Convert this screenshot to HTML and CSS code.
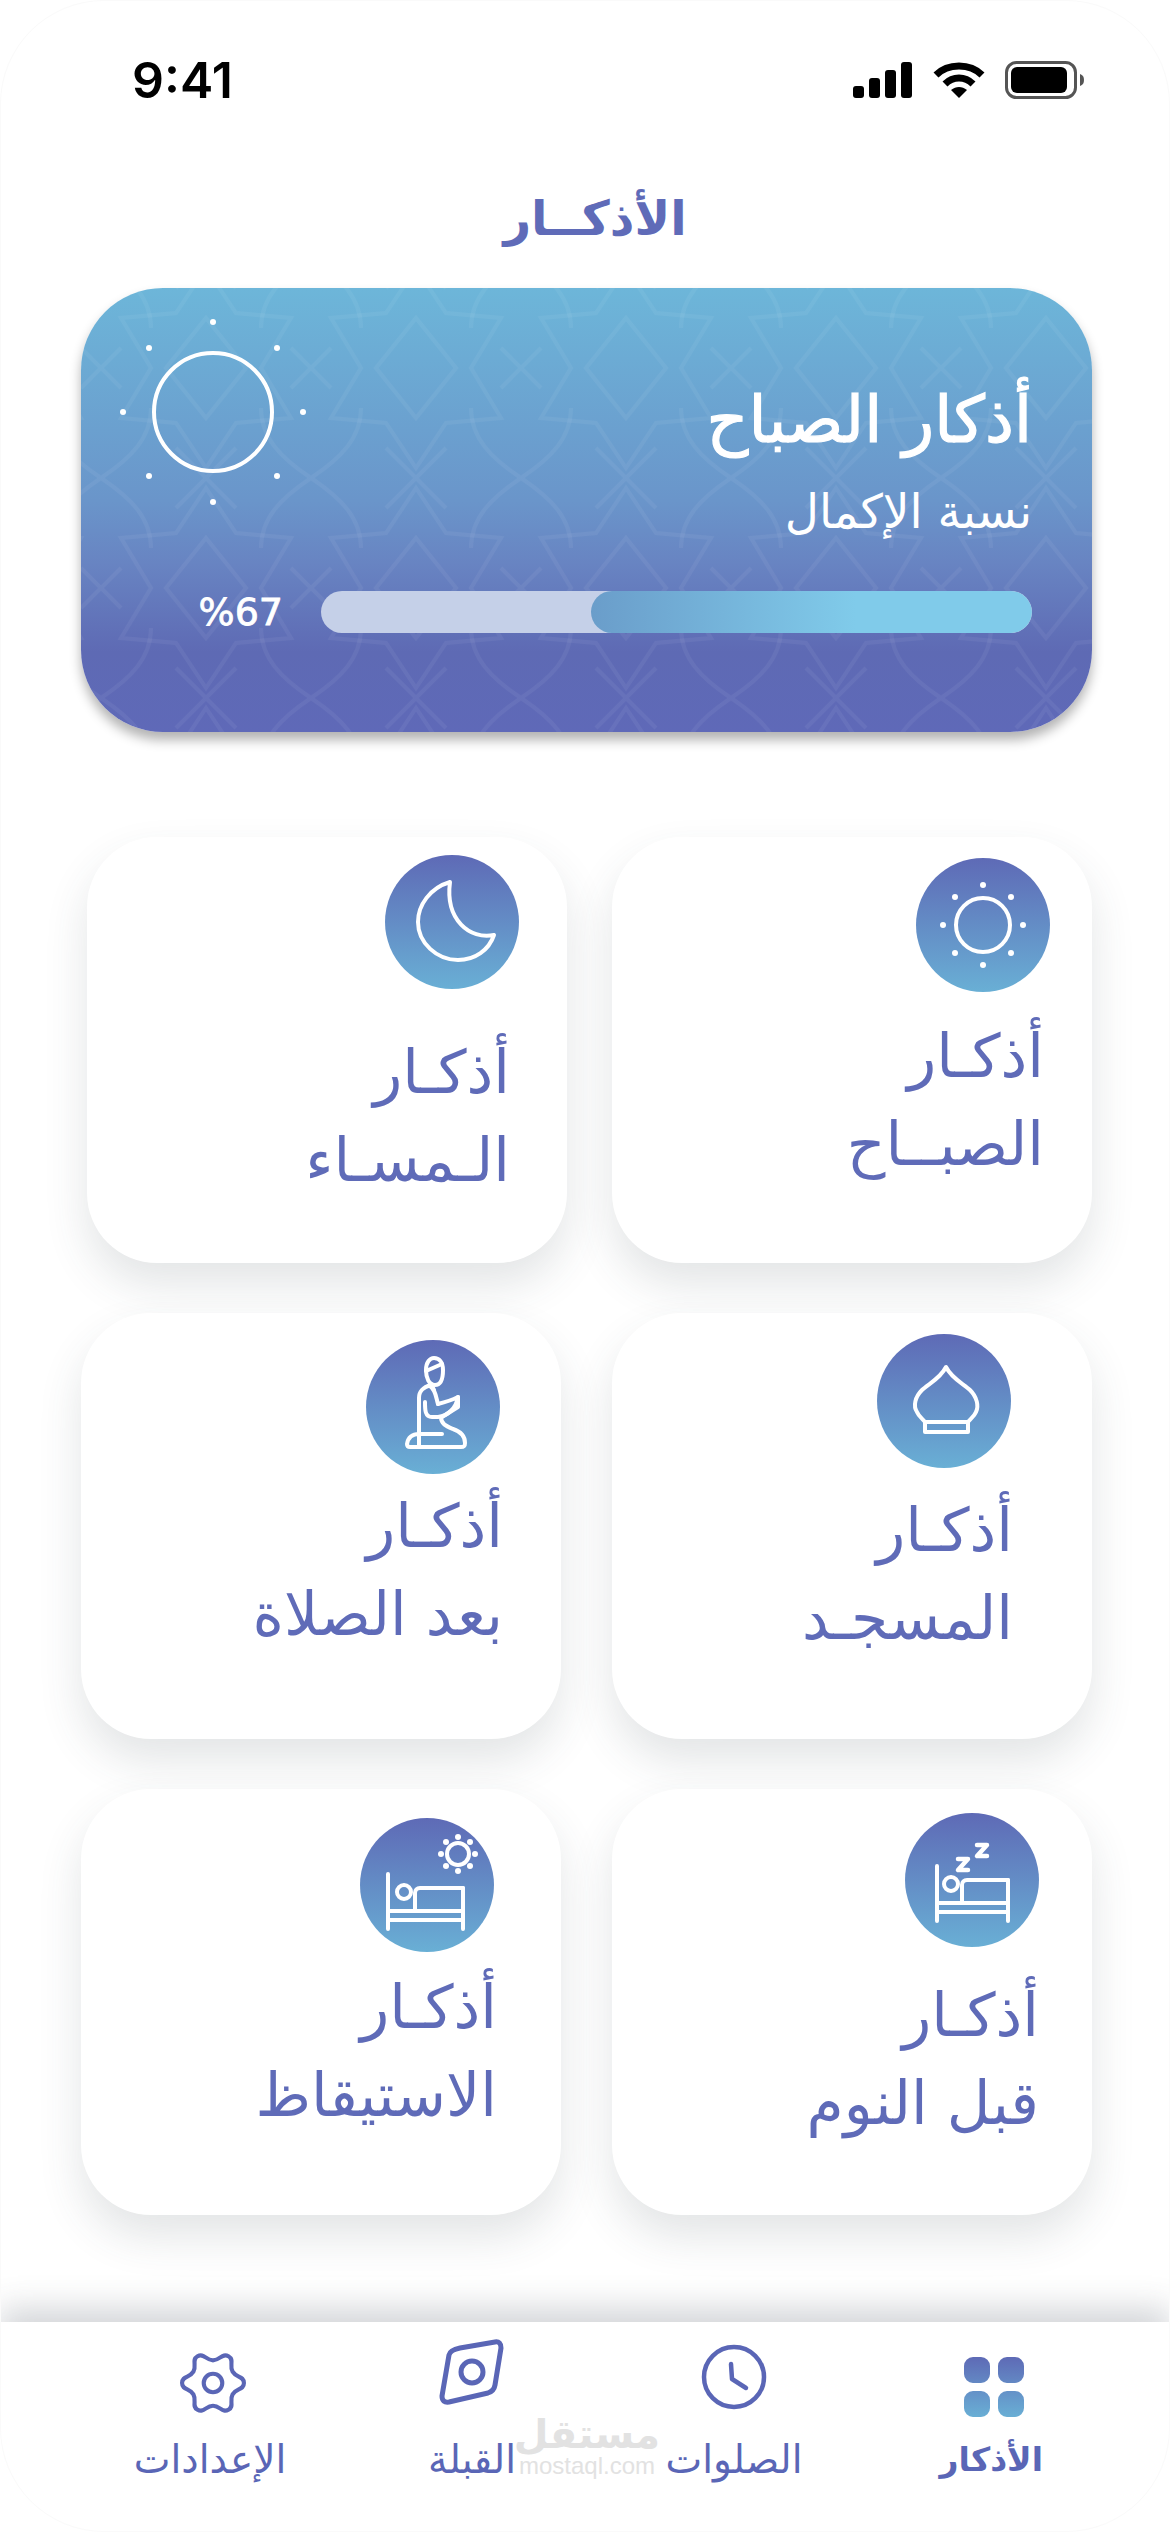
FILE: index.html
```html
<!DOCTYPE html>
<html lang="ar">

<head>
    <meta charset="utf-8">
    <title>الأذكار</title>
    <link rel="stylesheet" href="styles.css">
</head>

<body>
    <div class="screen">
        <div class="status-bar" dir="ltr">
            <span class="time">9:41</span>
            <div class="status-icons">
                <svg width="60" height="36" viewBox="0 0 60 36" fill="#000">
                    <rect x="0" y="24" width="11" height="12" rx="3" />
                    <rect x="16" y="16" width="11" height="20" rx="3" />
                    <rect x="32" y="8" width="11" height="28" rx="3" />
                    <rect x="48" y="0" width="11" height="36" rx="3" />
                </svg>
                <svg width="52" height="37" viewBox="0 0 52 37" fill="none" stroke="#000" stroke-width="7">
                    <path d="M3 13 C15 1 37 1 49 13" />
                    <path d="M12 22 C20 14 32 14 40 22" />
                    <path d="M26 36 L18 28 C23 24 29 24 34 28 Z" fill="#000" stroke="none" />
                </svg>
                <svg width="80" height="38" viewBox="0 0 80 38" fill="none">
                    <rect x="1.5" y="1.5" width="69" height="35" rx="10" stroke="#555" stroke-width="3" />
                    <rect x="6" y="6" width="56" height="26" rx="6" fill="#000" />
                    <path d="M75 13 C78 14 79 16 79 19 C79 22 78 24 75 25 Z" fill="#555" />
                </svg>
            </div>
        </div>

        <h1 class="page-title">الأذكــار</h1>

        <div class="hero">
            <svg class="hero-pattern" width="100%" height="100%">
                <defs>
                    <pattern id="arabesque" width="210" height="220" patternUnits="userSpaceOnUse" x="20" y="-30">
                        <g fill="none" stroke="#fff" stroke-opacity="0.05" stroke-width="4">
                            <path d="M105 10 L135 55 L190 60 L160 110 L190 160 L135 165 L105 210 L75 165 L20 160 L50 110 L20 60 L75 55 Z" />
                            <path d="M0 0 C30 20 50 40 50 70 M210 0 C180 20 160 40 160 70 M0 220 C30 200 50 180 50 150 M210 220 C180 200 160 180 160 150" />
                            <path d="M105 60 L145 110 L105 160 L65 110 Z" />
                            <path d="M0 110 L20 90 M210 110 L190 90 M0 110 L20 130 M210 110 L190 130" />
                            <path d="M105 0 L75 30 M105 0 L135 30 M105 220 L75 190 M105 220 L135 190" />
                        </g>
                    </pattern>
                </defs>
                <rect width="100%" height="100%" fill="url(#arabesque)" />
            </svg>
            <div class="hero-top">
                <div class="hero-text">
                    <h2>أذكار الصباح</h2>
                    <p>نسبة الإكمال</p>
                </div>
                <svg class="hero-sun" width="188" height="188" viewBox="0 0 188 188" fill="none" stroke="#fff">
                    <circle cx="94" cy="94" r="59" stroke-width="4" />
                    <g fill="#fff" stroke="none">
                        <circle cx="94" cy="4" r="3" />
                        <circle cx="94" cy="184" r="3" />
                        <circle cx="4" cy="94" r="3" />
                        <circle cx="184" cy="94" r="3" />
                        <circle cx="30" cy="30" r="3" />
                        <circle cx="158" cy="30" r="3" />
                        <circle cx="30" cy="158" r="3" />
                        <circle cx="158" cy="158" r="3" />
                    </g>
                </svg>
            </div>
            <div class="progress-row">
                <div class="progress-track">
                    <div class="progress-fill" style="width: 62%"></div>
                </div>
                <span class="progress-value" dir="ltr">%67</span>
            </div>
        </div>

        <div class="cards">
            <div class="card card-morning">
                <div class="icon-circle">
                    <svg width="134" height="134" viewBox="0 0 134 134" fill="none" stroke="#fff" stroke-width="4">
                        <circle cx="67" cy="67" r="27" />
                        <g fill="#fff" stroke="none">
                            <circle cx="67" cy="27" r="3" />
                            <circle cx="67" cy="107" r="3" />
                            <circle cx="27" cy="67" r="3" />
                            <circle cx="107" cy="67" r="3" />
                            <circle cx="39" cy="39" r="3" />
                            <circle cx="95" cy="39" r="3" />
                            <circle cx="39" cy="95" r="3" />
                            <circle cx="95" cy="95" r="3" />
                        </g>
                    </svg>
                </div>
                <div class="card-text">
                    <span>أذكـار</span>
                    <span>الصبــاح</span>
                </div>
            </div>

            <div class="card card-evening">
                <div class="icon-circle">
                    <svg width="134" height="134" viewBox="0 0 134 134" fill="none" stroke="#fff" stroke-width="4" stroke-linejoin="round">
                        <path d="M65 27 C45 33 33 50 33 67 C33 88 52 105 73 105 C90 105 104 95 109 80 C85 85 60 65 65 27 Z" />
                    </svg>
                </div>
                <div class="card-text">
                    <span>أذكـار</span>
                    <span>الـمسـاء</span>
                </div>
            </div>

            <div class="card card-mosque">
                <div class="icon-circle">
                    <svg width="134" height="134" viewBox="0 0 134 134" fill="none" stroke="#fff" stroke-width="4" stroke-linejoin="round">
                        <path d="M69 33 C63 45 51 50 45 56 C38 63 36 72 40 78 C42 83 46 85 48 88 H91 C93 85 97 83 99 78 C102 72 100 63 93 56 C87 50 75 45 69 33 Z" />
                        <rect x="48" y="88" width="43" height="10" />
                    </svg>
                </div>
                <div class="card-text">
                    <span>أذكـار</span>
                    <span>المسجـد</span>
                </div>
            </div>

            <div class="card card-prayer">
                <div class="icon-circle">
                    <svg width="134" height="134" viewBox="0 0 134 134" fill="none" stroke="#fff" stroke-width="4" stroke-linecap="round" stroke-linejoin="round">
                        <path d="M60 30 C60 22 64 18 68 18 C73 18 77 22 77 30 C77 38 75 45 69 45 C63 45 60 38 60 30 Z" />
                        <path d="M60 31 L76 24 M65 44 L68 50" />
                        <path d="M65 45 C58 47 53 50 53 58 V94" />
                        <path d="M64 46 C70 50 70 58 72 64" />
                        <path d="M59 62 C59 70 59 77 66 77 H72 C82 76 90 68 92 57 C86 60 80 62 72 64" />
                        <path d="M92 57 L92 67 L76 77" />
                        <path d="M75 77 C75 84 80 86 87 89 C96 92 99 97 99 103 C99 106 98 107 95 107 H44 C42 107 41 106 41 104 C42 98 46 94 53 94 H76" />
                        <path d="M53 94 V107" />
                    </svg>
                </div>
                <div class="card-text">
                    <span>أذكـار</span>
                    <span>بعد الصلاة</span>
                </div>
            </div>

            <div class="card card-sleep">
                <div class="icon-circle">
                    <svg width="134" height="134" viewBox="0 0 134 134" fill="none" stroke="#fff" stroke-width="4" stroke-linecap="round" stroke-linejoin="round">
                        <path d="M32 53 V108 M103 67 V108 M32 90 H103 M32 99 H103" />
                        <circle cx="46" cy="71" r="7" />
                        <path d="M57 90 V72 C57 69 59 67 62 67 H103" />
                        <path d="M53 46 H63 L53 57 H63" stroke-width="4.5" />
                        <path d="M72 32 H82 L72 43 H82" stroke-width="4.5" />
                    </svg>
                </div>
                <div class="card-text">
                    <span>أذكـار</span>
                    <span>قبل النوم</span>
                </div>
            </div>

            <div class="card card-wake">
                <div class="icon-circle">
                    <svg width="134" height="134" viewBox="0 0 134 134" fill="none" stroke="#fff" stroke-width="4" stroke-linecap="round" stroke-linejoin="round">
                        <path d="M28 56 V111 M103 70 V111 M28 93 H103 M28 102 H103" />
                        <circle cx="44" cy="74" r="7" />
                        <path d="M55 93 V75 C55 72 57 70 60 70 H103" />
                        <circle cx="98" cy="36" r="11" />
                        <g fill="#fff" stroke="none">
                            <circle cx="98" cy="19" r="3" />
                            <circle cx="98" cy="53" r="3" />
                            <circle cx="81" cy="36" r="3" />
                            <circle cx="115" cy="36" r="3" />
                            <circle cx="86" cy="24" r="3" />
                            <circle cx="110" cy="24" r="3" />
                            <circle cx="86" cy="48" r="3" />
                            <circle cx="110" cy="48" r="3" />
                        </g>
                    </svg>
                </div>
                <div class="card-text">
                    <span>أذكـار</span>
                    <span>الاستيقاظ</span>
                </div>
            </div>
        </div>

        <nav class="bottom-nav">
            <div class="nav-item nav-item-active">
                <svg class="nav-icon-grid" width="60" height="60" viewBox="0 0 60 60">
                    <defs>
                        <linearGradient id="navGrid" x1="0" y1="0" x2="0" y2="1">
                            <stop offset="0" stop-color="#5e6ab6" />
                            <stop offset="1" stop-color="#69afd5" />
                        </linearGradient>
                    </defs>
                    <path fill="url(#navGrid)" d="M9 0 H17 A9 9 0 0 1 26 9 V17 A9 9 0 0 1 17 26 H9 A9 9 0 0 1 0 17 V9 A9 9 0 0 1 9 0 Z M43 0 H51 A9 9 0 0 1 60 9 V17 A9 9 0 0 1 51 26 H43 A9 9 0 0 1 34 17 V9 A9 9 0 0 1 43 0 Z M9 34 H17 A9 9 0 0 1 26 43 V51 A9 9 0 0 1 17 60 H9 A9 9 0 0 1 0 51 V43 A9 9 0 0 1 9 34 Z M43 34 H51 A9 9 0 0 1 60 43 V51 A9 9 0 0 1 51 60 H43 A9 9 0 0 1 34 51 V43 A9 9 0 0 1 43 34 Z" />
                </svg>
                <span>الأذكار</span>
            </div>
            <div class="nav-item">
                <svg width="66" height="66" viewBox="0 0 66 66" fill="none" stroke="#5a66b6" stroke-width="4.5" stroke-linecap="round" stroke-linejoin="round">
                    <circle cx="33" cy="33" r="30" />
                    <path d="M30 20 L31 35 L45 44" />
                </svg>
                <span>الصلوات</span>
            </div>
            <div class="nav-item">
                <svg class="nav-icon-qibla" width="66" height="66" viewBox="0 0 66 66" fill="none" stroke="#5a66b6" stroke-width="5" stroke-linejoin="round">
                    <path d="M21 9 L56 3 Q62 2 62 9 L56 46 Q55 52 49 54 L10 63 Q3 64 3 57 L10 16 Q11 11 21 9 Z" />
                    <circle cx="33" cy="33" r="11" />
                </svg>
                <span>القبلة</span>
            </div>
            <div class="nav-item">
                <svg class="nav-icon-gear" width="68" height="66" viewBox="0 0 64 64" fill="none" stroke="#5a66b6" stroke-width="4">
                    <path d="M32 10 C39 10 41 2.5 47 6 C53 9.5 47.5 15 51 21 C54.5 27 62 25 62 32 C62 39 54.5 37 51 43 C47.5 49 53 54.5 47 58 C41 61.5 39 54 32 54 C25 54 23 61.5 17 58 C11 54.5 16.500 49 13 43 C9.5 37 2 39 2 32 C2 25 9.5 27 13 21 C16.500 15 11 9.5 17 6 C23 2.5 25 10 32 10 Z" />
                    <circle cx="32" cy="32" r="9" />
                </svg>
                <span>الإعدادات</span>
            </div>
            <div class="watermark">
                <b>مستقل</b>
                <small dir="ltr">mostaql.com</small>
            </div>
        </nav>
    </div>
</body>

</html>
```

FILE: styles.css
```css
* {
    box-sizing: border-box;
}

body {
    margin: 0;
    background: #ffffff;
    font-family: "DejaVu Sans", sans-serif;
}

.screen {
    position: relative;
    width: 1170px;
    height: 2532px;
    overflow: hidden;
    display: flex;
    flex-direction: column;
    direction: rtl;
    background: #ffffff;
}

/* faint outline of the device corners */
.screen::after {
    content: "";
    position: absolute;
    top: 0;
    left: 0;
    right: 0;
    bottom: 0;
    border: 1px solid #fafafa;
    border-radius: 104px;
    pointer-events: none;
}

.status-bar {
    height: 160px;
    flex: none;
    display: flex;
    justify-content: space-between;
    align-items: flex-start;
    padding: 52px 85px 0 132px;
    direction: ltr;
}

.time {
    font-family: Inter, sans-serif;
    font-weight: 600;
    font-size: 50px;
    line-height: 56px;
    color: #000000;
}

.status-icons {
    display: flex;
    align-items: center;
    gap: 20px;
    padding-top: 9px;
}

.page-title {
    height: 128px;
    flex: none;
    margin: 0;
    text-align: center;
    color: #5f6bb8;
    font-size: 48px;
    font-weight: bold;
    line-height: 116px;
    padding-left: 20px;
}

.hero {
    position: relative;
    flex: none;
    width: 1011px;
    height: 444px;
    margin-right: 78px;
    padding: 0 60px 0 60px;
    border-radius: 82px;
    overflow: hidden;
    background: linear-gradient(180deg, #6db6d9 0%, #6a95ca 48%, #6884c2 62%, #5e6ab4 82%, #5f69b8 100%);
    box-shadow: 0 8px 12px rgba(0, 0, 0, 0.3);
    color: #ffffff;
}

.hero-pattern {
    position: absolute;
    top: 0;
    left: 0;
}

.hero-top {
    position: relative;
    display: flex;
    justify-content: space-between;
    align-items: flex-start;
    height: 303px;
}

.hero-text {
    padding-top: 88px;
}

.hero-text h2 {
    margin: 0;
    font-size: 65px;
    font-weight: normal;
    -webkit-text-stroke: 1.2px #ffffff;
    line-height: 88px;
}

.hero-text p {
    margin: 18px 0 0;
    font-size: 47px;
    line-height: 60px;
}

.hero-sun {
    margin: 30px 0 0 -22px;
}

.progress-row {
    position: relative;
    display: flex;
    align-items: center;
    gap: 38px;
}

.progress-track {
    width: 711px;
    height: 42px;
    border-radius: 21px;
    background: #c5d0e8;
    overflow: hidden;
}

.progress-fill {
    height: 100%;
    border-radius: 21px;
    background: linear-gradient(90deg, #6a9dca 0%, #80cbea 60%);
}

.progress-value {
    font-size: 38px;
    line-height: 42px;
    -webkit-text-stroke: 0.8px #ffffff;
}

.cards {
    flex: none;
    display: grid;
    grid-template-columns: 480px 480px;
    grid-auto-rows: 426px;
    column-gap: 51px;
    row-gap: 50px;
    margin: 105px 78px 0 81px;
}

.card {
    background: #ffffff;
    border-radius: 70px;
    box-shadow: 0 22px 44px rgba(60, 70, 80, 0.14);
    display: flex;
    flex-direction: column;
}

.icon-circle {
    width: 134px;
    height: 134px;
    flex: none;
    border-radius: 50%;
    background: linear-gradient(180deg, #5e6ab6 0%, #69afd5 100%);
}

.card-text {
    display: flex;
    flex-direction: column;
    color: #5f6bb8;
    font-size: 60px;
    line-height: 88px;
}

.card-morning { padding: 21px 42px 0 0; }
.card-morning .card-text { margin: 20px 6px 0 0; }

.card-evening {
    margin: 0 -6px 0 6px;
    padding: 18px 48px 0 0;
}
.card-evening .card-text { margin: 39px 9px 0 0; }

.card-mosque { padding: 21px 81px 0 0; }
.card-mosque .card-text { margin: 18px -2px 0 0; }

.card-prayer { padding: 27px 61px 0 0; }
.card-prayer .card-text { margin: 8px -3px 0 0; }

.card-sleep { padding: 24px 53px 0 0; }
.card-sleep .card-text { margin: 24px 0 0; }

.card-wake { padding: 29px 67px 0 0; }
.card-wake .card-text { margin: 11px -3px 0 0; }

.bottom-nav {
    position: relative;
    flex: none;
    margin-top: auto;
    height: 210px;
    display: grid;
    grid-template-columns: repeat(4, 262px);
    padding: 0 43px 0 79px;
    background: #ffffff;
    box-shadow: 0 -14px 30px rgba(60, 70, 80, 0.22);
}

.nav-item {
    position: relative;
    height: 210px;
    display: flex;
    flex-direction: column;
    align-items: center;
    padding-top: 22px;
    color: #5a66b6;
    font-size: 39px;
}

.nav-item svg {
    height: 66px;
    flex: none;
}

.nav-item span {
    position: absolute;
    top: 112px;
    line-height: 52px;
    white-space: nowrap;
}

.nav-item-active span {
    font-size: 33px;
    font-weight: bold;
    right: 84px;
}

.nav-icon-grid {
    margin: 10px 5px 0 0;
}

.nav-icon-qibla {
    margin-top: -5px;
}

.nav-icon-gear {
    margin: 6px 0 0 6px;
}

.watermark {
    position: absolute;
    left: 518px;
    top: 92px;
    width: 138px;
    display: flex;
    flex-direction: column;
    align-items: center;
    color: #e2e2e2;
    line-height: 1;
}

.watermark b {
    font-size: 40px;
}

.watermark small {
    font-family: "Liberation Sans", sans-serif;
    font-size: 24px;
}
```
